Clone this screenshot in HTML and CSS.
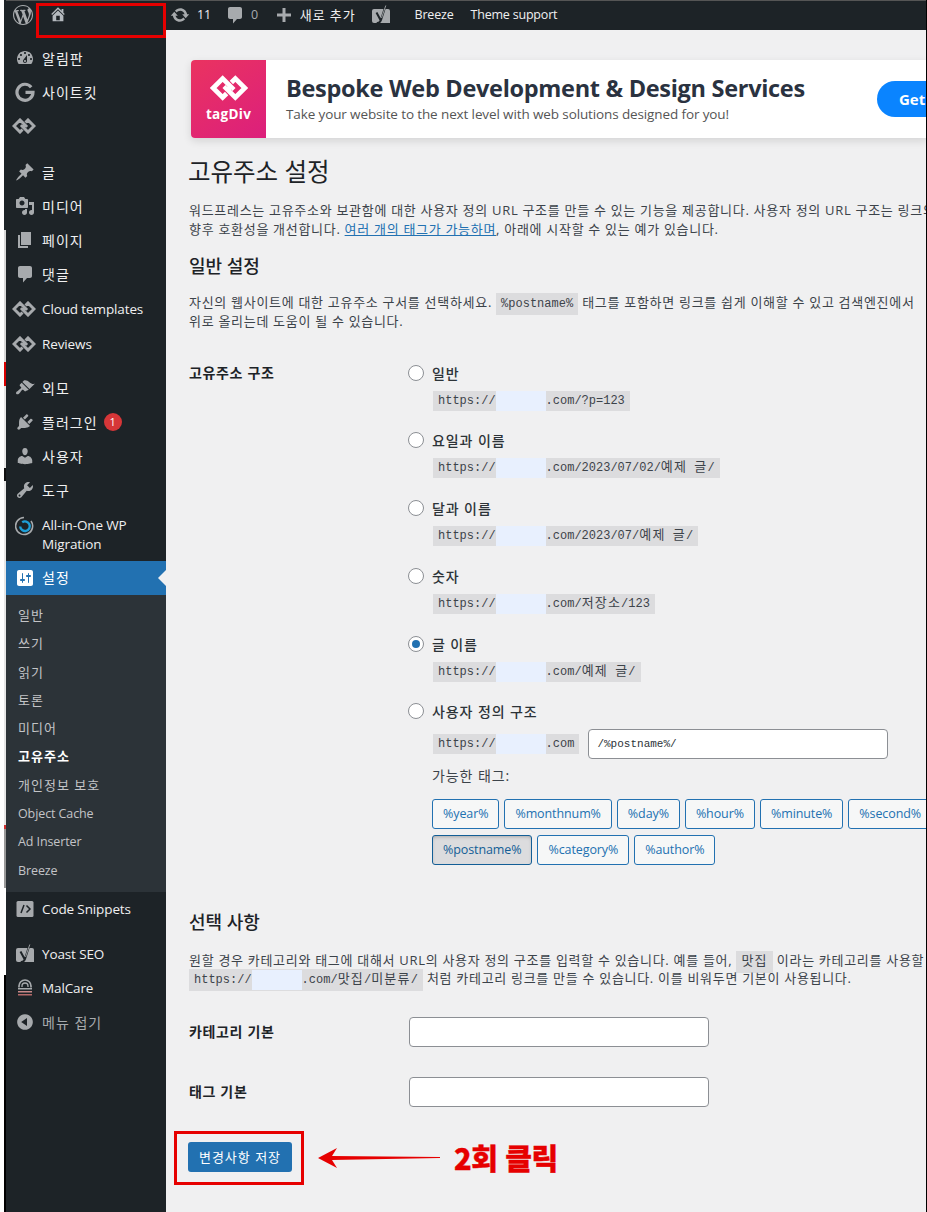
FILE: index.html
```html
<!DOCTYPE html>
<html lang="ko">
<head>
<meta charset="utf-8">
<title>고유주소 설정</title>
<link rel="stylesheet" href="styles.css">
</head>
<body>
<svg class="sprite" xmlns="http://www.w3.org/2000/svg">
  <symbol id="i-wp" viewBox="0 0 20 20"><path d="M20 10c0-5.51-4.49-10-10-10C4.48 0 0 4.49 0 10c0 5.52 4.48 10 10 10 5.51 0 10-4.48 10-10zM7.78 15.37L4.37 6.22c.55-.02 1.17-.08 1.17-.08.5-.06.44-1.13-.06-1.11 0 0-1.45.11-2.37.11-.18 0-.37 0-.58-.01C4.12 2.69 6.87 1.11 10 1.11c2.33 0 4.45.87 6.05 2.34-.68-.11-1.65.39-1.65 1.58 0 .74.45 1.36.9 2.1.35.61.55 1.36.55 2.46 0 1.49-1.4 5-1.4 5l-3.03-8.37c.54-.02.82-.17.82-.17.5-.05.44-1.25-.06-1.22 0 0-1.44.12-2.38.12-.87 0-2.33-.12-2.33-.12-.5-.03-.56 1.2-.06 1.22l.92.08 1.26 3.41zM17.41 10c.24-.64.74-1.87.43-4.25.7 1.29 1.05 2.71 1.05 4.25 0 3.29-1.73 6.24-4.4 7.78.97-2.59 1.94-5.2 2.92-7.78zM6.1 18.09C3.12 16.65 1.11 13.53 1.11 10c0-1.3.23-2.48.72-3.59C3.25 10.3 4.67 14.2 6.1 18.09zm4.03-6.63l2.58 6.98c-.86.29-1.76.45-2.71.45-.79 0-1.57-.11-2.29-.33.81-2.38 1.62-4.74 2.42-7.1z"/></symbol>
  <symbol id="i-home" viewBox="0 0 20 20"><path d="M16 8.5l1.53 1.53-1.06 1.06L10 4.62l-6.47 6.47-1.06-1.06L10 2.5l4 4v-2h2v4zm-6-2.46l6 5.99V18H4v-5.97zM12 17v-5H8v5h4z"/></symbol>
  <symbol id="i-update" viewBox="0 0 20 20"><path d="M10.2 3.28c3.53 0 6.43 2.61 6.92 6h2.08l-3.5 4-3.5-4h2.32c-.45-1.97-2.21-3.44-4.32-3.44-1.45 0-2.73.71-3.54 1.78L4.95 5.66C6.23 4.2 8.11 3.28 10.2 3.28zm-.4 13.44c-3.52 0-6.43-2.61-6.92-6H.8l3.5-4c1.17 1.33 2.33 2.67 3.5 4H5.48c.45 1.97 2.21 3.44 4.32 3.44 1.45 0 2.73-.71 3.54-1.78l1.71 1.95c-1.28 1.46-3.15 2.39-5.25 2.39z"/></symbol>
  <symbol id="i-comment" viewBox="0 0 20 20"><path d="M5 2h10c1.1 0 2 .9 2 2v8c0 1.1-.9 2-2 2h-3l-4 4.5V14H5c-1.1 0-2-.9-2-2V4c0-1.100.9-2 2-2z"/></symbol>
  <symbol id="i-plus" viewBox="0 0 20 20"><path d="M17 8.500v3h-5.500V17h-3v-5.500H3v-3h5.500V3h3v5.500z"/></symbol>
  <symbol id="i-dash" viewBox="0 0 20 20"><path d="M3.760 16h12.480c1.100-1.370 1.760-3.110 1.760-5 0-4.420-3.580-8-8-8s-8 3.580-8 8c0 1.890.66 3.630 1.760 5zM10 4c.55 0 1 .45 1 1s-.45 1-1 1-1-.45-1-1 .45-1 1-1zM6 6c.55 0 1 .45 1 1s-.45 1-1 1-1-.45-1-1 .45-1 1-1zm8 0c.55 0 1 .45 1 1s-.45 1-1 1-1-.45-1-1 .45-1 1-1zm-5.370 5.550L12 7v6c0 1.100-.9 2-2 2s-2-.9-2-2c0-.57.24-1.080.63-1.450zM4 10c.55 0 1 .45 1 1s-.45 1-1 1-1-.45-1-1 .45-1 1-1zm12 0c.55 0 1 .45 1 1s-.45 1-1 1-1-.45-1-1 .45-1 1-1zm-5 3c0-.55-.45-1-1-1s-1 .45-1 1 .45 1 1 1 1-.45 1-1z"/></symbol>
  <symbol id="i-g" viewBox="0 0 20 20"><path d="M16.200 5.200A8 8 0 1 0 18 10.300H10.500" fill="none" stroke="currentColor" stroke-width="3.200"/></symbol>
  <symbol id="i-tag" viewBox="0 0 24 16"><path d="M10.500 11.500L8 14 2 8l6-6 6 6-.8.8M13.500 4.500L16 2l6 6-6 6-6-6 .8-.8" fill="none" stroke="currentColor" stroke-width="3"/></symbol>
  <symbol id="i-pin" viewBox="0 0 20 20"><path d="M10.440 3.020l1.820-1.820 6.360 6.350-1.830 1.820c-1.050-.68-2.480-.57-3.410.36l-.75.75c-.92.93-1.040 2.350-.35 3.410l-1.830 1.820-2.410-2.410-2.800 2.790c-.42.42-3.380 2.710-3.800 2.290s1.860-3.390 2.280-3.810l2.790-2.790L4.100 9.360l1.830-1.820c1.050.69 2.480.57 3.400-.36l.75-.75c.93-.92 1.050-2.350.36-3.410z"/></symbol>
  <symbol id="i-media" viewBox="0 0 20 20"><path d="M13 11V4c0-.55-.45-1-1-1h-1.670L9 1H5L3.670 3H2c-.55 0-1 .45-1 1v7c0 .55.45 1 1 1h10c.55 0 1-.45 1-1zM7 4.500c1.380 0 2.500 1.120 2.500 2.500S8.380 9.500 7 9.500 4.500 8.380 4.500 7 5.620 4.500 7 4.500zM14 6h5v10.500c0 1.380-1.120 2.500-2.500 2.500S14 17.880 14 16.500s1.120-2.500 2.500-2.500c.17 0 .34.020.5.050V9h-3V6zm-4 8.050V13h2v3.500c0 1.380-1.120 2.500-2.500 2.500S7 17.880 7 16.500 8.120 14 9.500 14c.17 0 .34.020.5.050z"/></symbol>
  <symbol id="i-page" viewBox="0 0 20 20"><path d="M6 15V2h10v13H6zm-1 1h8v2H3V5h2v11z"/></symbol>
  <symbol id="i-brush" viewBox="0 0 20 20"><path d="M14.480 11.060L7.410 3.990l1.500-1.500c.5-.56 2.300-.47 3.510.32 1.210.8 1.430 1.280 2.910 2.100 1.180.64 2.450 1.260 4.450.85zm-.71.71L6.700 4.700 4.930 6.470c-.39.39-.39 1.020 0 1.410l1.060 1.060c.39.39.39 1.030 0 1.420-.6.6-1.430 1.110-2.210 1.690-.35.26-.7.53-1.010.84C1.430 13.230.4 14.960 1.400 15.960c.99 1 2.730-.04 3.070-.69.31-.31.58-.66.85-1.010.57-.78 1.080-1.610 1.690-2.210.39-.39 1.020-.39 1.410 0l1.060 1.060c.39.39 1.020.39 1.410 0z"/></symbol>
  <symbol id="i-plugin" viewBox="0 0 20 20"><path d="M13.110 4.360L9.870 7.600 8 5.730l3.240-3.240c.35-.34 1.050-.2 1.560.32.52.51.66 1.210.31 1.550zm-8 1.770l.91-1.120 9.010 9.010-1.190.84c-.71.71-2.630 1.160-3.820 1.160H6.140L4.900 17.260c-.59.59-1.540.59-2.120 0-.59-.58-.59-1.530 0-2.120l1.240-1.240v-3.880c0-1.130.4-3.190 1.090-3.890zm7.260 3.970l3.240-3.240c.34-.35 1.040-.21 1.550.31.52.51.66 1.210.31 1.550l-3.240 3.250z"/></symbol>
  <symbol id="i-users" viewBox="0 0 20 20"><path d="M10 9.250c-2.270 0-2.730-3.440-2.730-3.440C7 4.020 7.820 2 9.970 2c2.160 0 2.980 2.020 2.710 3.810 0 0-.41 3.440-2.680 3.440zm0 2.570L12.720 10c2.390 0 4.520 2.330 4.520 4.530v2.490s-3.650 1.130-7.240 1.130c-3.650 0-7.240-1.130-7.240-1.130v-2.490c0-2.250 1.940-4.480 4.470-4.480z"/></symbol>
  <symbol id="i-wrench" viewBox="0 0 20 20"><path d="M16.680 9.770c-1.340 1.340-3.300 1.670-4.950.99l-5.410 6.520c-.99.99-2.590.99-3.580 0s-.99-2.590 0-3.570l6.520-5.420c-.68-1.650-.35-3.610.99-4.950 1.280-1.280 3.120-1.620 4.720-1.060l-2.890 2.890 2.820 2.820 2.860-2.870c.53 1.580.18 3.390-1.080 4.670zM3.810 16.210c.4.39 1.040.39 1.430 0 .4-.4.4-1.040 0-1.430-.39-.4-1.030-.4-1.430 0-.39.39-.39 1.030 0 1.430z"/></symbol>
  <symbol id="i-settings" viewBox="0 0 20 20"><path d="M18 16V4c0-1.100-.9-2-2-2H4c-1.100 0-2 .9-2 2v12c0 1.100.9 2 2 2h12c1.100 0 2-.9 2-2zM8 11h1c.55 0 1 .45 1 1s-.45 1-1 1H8v1.500c0 .28-.22.5-.5.5s-.5-.22-.5-.5V13H6c-.55 0-1-.45-1-1s.45-1 1-1h1V5.500c0-.28.22-.5.5-.5s.5.22.5.5V11zm5-2h-1c-.55 0-1-.45-1-1s.45-1 1-1h1V5.500c0-.28.22-.5.5-.5s.5.22.5.5V7h1c.55 0 1 .45 1 1s-.45 1-1 1h-1v5.500c0 .28-.22.5-.5.5s-.5-.22-.5-.5V9z"/></symbol>
  <symbol id="i-collapse" viewBox="0 0 20 20"><path d="M10 2.160c4.330 0 7.840 3.510 7.840 7.840s-3.510 7.840-7.840 7.840S2.160 14.330 2.160 10 5.710 2.160 10 2.160zm2 11.720V6.120L6.180 9.970z"/></symbol>
  <symbol id="i-yoast" viewBox="0 0 20 20"><path d="M3 4h14a2 2 0 0 1 2 2v12H3a2 2 0 0 1-2-2V6a2 2 0 0 1 2-2z"/><path d="M5.500 7.500l4 7.500M14.500 1L10 15c-.6 2-1.900 3-4.300 3.200" fill="none" stroke="#1d2327" stroke-width="2"/><path d="M14.800 .5L10.500 13" fill="none" stroke="currentColor" stroke-width=".9"/></symbol>
  <symbol id="i-aio" viewBox="0 0 20 20"><path d="M9 1.500a8.500 8.500 0 1 0 7 3.500" fill="none" stroke="#a7aaad" stroke-width="1.600"/><path d="M5.200 10.500a4.800 4.800 0 1 0 2-4.200" fill="none" stroke="#1e9fd8" stroke-width="2.400"/></symbol>
  <symbol id="i-mal" viewBox="0 0 20 20"><path d="M4 9.500V8a6 6 0 0 1 12 0v1.500" fill="none" stroke="currentColor" stroke-width="1.700"/><path d="M7 9V8a3 3 0 0 1 6 0v1" fill="none" stroke="currentColor" stroke-width="1.300"/><path d="M3 10h14v1.500H3z"/><path d="M3 13h14v1.500H3z" fill="#c98a8a"/><path d="M3 16h14v1.500H3z" fill="#b56a6a"/></symbol>
  <symbol id="i-code" viewBox="0 0 20 20"><rect x="1.500" y="2" width="17" height="16" rx="1.500"/><path d="M9 6l-3 8M11.500 6.500L15 10l-3.500 3.500" fill="none" stroke="#1d2327" stroke-width="1.500"/></symbol>
</svg>

<div class="frame">
  <div class="strip"></div>
  <div class="app">
    <header class="adminbar">
      <svg class="bar-icon wp"><use href="#i-wp"/></svg>
      <svg class="bar-icon home"><use href="#i-home"/></svg>
      <svg class="bar-icon update"><use href="#i-update"/></svg>
      <span class="bar-text count">11</span>
      <svg class="bar-icon comment"><use href="#i-comment"/></svg>
      <span class="bar-text zero">0</span>
      <svg class="bar-icon plus"><use href="#i-plus"/></svg>
      <span class="bar-text new">새로 추가</span>
      <svg class="bar-icon yoast"><use href="#i-yoast"/></svg>
      <span class="bar-text breeze">Breeze</span>
      <span class="bar-text theme">Theme support</span>
    </header>
    <div class="columns">
      <nav class="sidebar">
        <a class="item"><svg class="ico"><use href="#i-dash"/></svg><span class="ko">알림판</span></a>
        <a class="item"><svg class="ico"><use href="#i-g"/></svg><span class="ko">사이트킷</span></a>
        <a class="item"><svg class="ico tag"><use href="#i-tag"/></svg></a>
        <div class="sep"></div>
        <a class="item"><svg class="ico"><use href="#i-pin"/></svg><span class="ko">글</span></a>
        <a class="item"><svg class="ico"><use href="#i-media"/></svg><span class="ko">미디어</span></a>
        <a class="item"><svg class="ico"><use href="#i-page"/></svg><span class="ko">페이지</span></a>
        <a class="item"><svg class="ico"><use href="#i-comment"/></svg><span class="ko">댓글</span></a>
        <a class="item item-wide"><svg class="ico tag"><use href="#i-tag"/></svg><span>Cloud templates</span></a>
        <a class="item item-wide"><svg class="ico tag"><use href="#i-tag"/></svg><span>Reviews</span></a>
        <div class="sep sep-b"></div>
        <a class="item"><svg class="ico"><use href="#i-brush"/></svg><span class="ko">외모</span></a>
        <a class="item"><svg class="ico"><use href="#i-plugin"/></svg><span class="ko">플러그인</span><b class="badge">1</b></a>
        <a class="item"><svg class="ico"><use href="#i-users"/></svg><span class="ko">사용자</span></a>
        <a class="item"><svg class="ico"><use href="#i-wrench"/></svg><span class="ko">도구</span></a>
        <a class="item item-two"><svg class="ico"><use href="#i-aio"/></svg><span>All-in-One WP<br>Migration</span></a>
        <a class="item current"><svg class="ico"><use href="#i-settings"/></svg><span class="ko">설정</span></a>
        <div class="submenu">
          <a class="ko-sub">일반</a><a class="ko-sub">쓰기</a><a class="ko-sub">읽기</a><a class="ko-sub">토론</a><a class="ko-sub">미디어</a>
          <a class="ko-sub active">고유주소</a>
          <a class="ko-sub">개인정보 보호</a><a>Object Cache</a><a>Ad Inserter</a><a>Breeze</a>
        </div>
        <a class="item"><svg class="ico"><use href="#i-code"/></svg><span>Code Snippets</span></a>
        <div class="sep sep-c"></div>
        <a class="item"><svg class="ico"><use href="#i-yoast"/></svg><span>Yoast SEO</span></a>
        <a class="item"><svg class="ico"><use href="#i-mal"/></svg><span>MalCare</span></a>
        <a class="item muted"><svg class="ico"><use href="#i-collapse"/></svg><span class="ko">메뉴 접기</span></a>
      </nav>
      <main class="content">
        <section class="banner">
          <div class="banner-logo">
            <svg class="banner-mark"><use href="#i-tag"/></svg>
            <span>tagDiv</span>
          </div>
          <div class="banner-copy">
            <strong>Bespoke Web Development &amp; Design Services</strong>
            <span>Take your website to the next level with web solutions designed for you!</span>
          </div>
          <a class="banner-cta">Get</a>
        </section>
        <h1>고유주소 설정</h1>
        <p class="intro">워드프레스는 고유주소와 보관함에 대한 사용자 정의 URL 구조를 만들 수 있는 기능을 제공합니다. 사용자 정의 URL 구조는 링크의<br>향후 호환성을 개선합니다. <a class="link">여러 개의 태그가 가능하며</a>, 아래에 시작할 수 있는 예가 있습니다.</p>
        <h2>일반 설정</h2>
        <p class="general">자신의 웹사이트에 대한 고유주소 구서를 선택하세요. <code>%postname%</code> 태그를 포함하면 링크를 쉽게 이해할 수 있고 검색엔진에서<br>위로 올리는데 도움이 될 수 있습니다.</p>

        <div class="form-row structure">
          <div class="row-label">고유주소 구조</div>
          <div class="options">
            <div class="option">
              <label class="radio-line"><i class="radio"></i>일반</label>
              <div class="url-row"><code class="url">https://<i class="mask"></i>.com/?p=123</code></div>
            </div>
            <div class="option">
              <label class="radio-line"><i class="radio"></i>요일과 이름</label>
              <div class="url-row"><code class="url">https://<i class="mask"></i>.com/2023/07/02/<span class="kc">예제</span> <span class="kc">글</span>/</code></div>
            </div>
            <div class="option">
              <label class="radio-line"><i class="radio"></i>달과 이름</label>
              <div class="url-row"><code class="url">https://<i class="mask"></i>.com/2023/07/<span class="kc">예제</span> <span class="kc">글</span>/</code></div>
            </div>
            <div class="option">
              <label class="radio-line"><i class="radio"></i>숫자</label>
              <div class="url-row"><code class="url">https://<i class="mask"></i>.com/<span class="kc">저장소</span>/123</code></div>
            </div>
            <div class="option">
              <label class="radio-line"><i class="radio checked"></i>글 이름</label>
              <div class="url-row"><code class="url">https://<i class="mask"></i>.com/<span class="kc">예제</span> <span class="kc">글</span>/</code></div>
            </div>
            <div class="option custom">
              <label class="radio-line"><i class="radio"></i>사용자 정의 구조</label>
              <div class="custom-row">
                <code class="url">https://<i class="mask"></i>.com</code>
                <div class="field field-custom">/%postname%/</div>
              </div>
              <div class="tags-label">가능한 태그:</div>
              <div class="tags">
                <a class="tag-btn">%year%</a><a class="tag-btn">%monthnum%</a><a class="tag-btn">%day%</a><a class="tag-btn">%hour%</a><a class="tag-btn">%minute%</a><a class="tag-btn">%second%</a>
              </div>
              <div class="tags">
                <a class="tag-btn on">%postname%</a><a class="tag-btn">%category%</a><a class="tag-btn">%author%</a>
              </div>
            </div>
          </div>
        </div>

        <h2 class="optional">선택 사항</h2>
        <p class="optional-text">원할 경우 카테고리와 태그에 대해서 URL의 사용자 정의 구조를 입력할 수 있습니다. 예를 들어, <code><span class="kc">맛집</span></code> 이라는 카테고리를 사용할<br><code class="url-inline">https://<i class="mask mask-s"></i>.com/<span class="kc">맛집</span>/<span class="kc">미분류</span>/</code> 처럼 카테고리 링크를 만들 수 있습니다. 이를 비워두면 기본이 사용됩니다.</p>

        <div class="form-row input-row first">
          <div class="row-label">카테고리 기본</div>
          <div class="field"></div>
        </div>
        <div class="form-row input-row">
          <div class="row-label">태그 기본</div>
          <div class="field"></div>
        </div>
        <a class="save">변경사항 저장</a>
      </main>
    </div>
  </div>

  <div class="mark mark-home"></div>
  <div class="mark mark-save"></div>
  <svg class="arrow" viewBox="0 0 124 22"><polygon points="0,11 19,1 14,9 122,10 122,11 14,13 19,21" /></svg>
  <div class="note">2회 클릭</div>
</div>
</body>
</html>
```
FILE: styles.css
```css
* { box-sizing: border-box; }
html, body { margin: 0; padding: 0; }
body {
  width: 927px;
  height: 1212px;
  overflow: hidden;
  background: #fff;
  color: #3c434a;
  font-family: "Open Sans", "Noto Sans CJK KR", sans-serif;
  font-size: 13px;
}
.sprite { display: none; }
svg { fill: currentColor; display: block; flex: none; }

.frame { position: relative; display: flex; width: 927px; height: 1212px; overflow: hidden; }
.strip {
  width: 6px;
  flex: none;
  border-left: 4px solid #fff;
  background: linear-gradient(to bottom,
    #1d2327 0, #1d2327 230px,
    #d8d8d8 230px, #d8d8d8 362px,
    #d90000 362px, #d90000 386px,
    #e6e6e6 386px, #e6e6e6 468px,
    #111 468px, #111 481px,
    #e6e6e6 481px, #e6e6e6 825px,
    #d03030 825px, #d03030 829px,
    #999 829px, #999 888px,
    #fff 888px, #fff 975px,
    #000 975px);
}
.app { flex: 1; min-width: 0; display: flex; flex-direction: column; border-right: 1px solid #000; }

/* admin bar */
.adminbar {
  height: 30px;
  flex: none;
  display: flex;
  align-items: center;
  padding-bottom: 2px;
  background: #1d2327;
  border-top: 1px solid #555;
  color: #a7aaad;
}
.bar-text { color: #f0f0f1; font-size: 12.5px; letter-spacing: -.2px; line-height: 26px; white-space: nowrap; }
.bar-icon { width: 20px; height: 20px; }
.wp { margin-left: 7px; }
.home { margin-left: 16px; width: 18px; height: 18px; margin-top: -1px; color: #b4b9be; }
.update { margin-left: 103px; }
.count { margin-left: 7px; }
.comment { margin-left: 14px; }
.zero { margin-left: 6px; color: #a7aaad; }
.plus { margin-left: 16px; }
.adminbar .new { margin-left: 6px; font-size: 13px; letter-spacing: .9px; }
.adminbar .yoast { margin-left: 15px; }
.breeze { margin-left: 24px; }
.theme { margin-left: 17px; }

/* sidebar */
.columns { flex: 1; display: flex; min-height: 0; }
.sidebar { width: 160px; flex: none; background: #1d2327; padding-top: 11px; }
.item {
  display: flex;
  align-items: center;
  height: 34px;
  padding-left: 9px;
  color: #f0f0f1;
  font-size: 13.5px;
  letter-spacing: -.12px;
  white-space: nowrap;
  position: relative;
}
.ko { font-size: 14px; letter-spacing: 1px; }
.ico { width: 20px; height: 20px; margin-right: 7px; color: #a7aaad; }
.ico.tag { width: 24px; height: 16px; margin-left: -3px; margin-right: 6px; }
.item-wide { height: 35px; }
.item-two { height: 53px; line-height: 19px; align-items: center; margin-top: 1px; }
.item-two .ico { margin-top: -18px; }
.sep { height: 12px; }
.sep-b { height: 10px; }
.sep-c { height: 11px; }
.badge {
  width: 18px; height: 18px; border-radius: 50%;
  margin-left: 6px;
  background: #d63638; color: #fff;
  font-size: 11px; font-weight: 400; text-align: center; line-height: 18px;
}
.current { background: #2271b1; color: #fff; }
.current .ico { color: #fff; }
.current .ko { margin-top: -2px; }
.current::after {
  content: "";
  position: absolute;
  right: 0; top: 9px;
  border: 8px solid transparent;
  border-right-color: #f0f0f1;
  border-left-width: 0;
}
.submenu { background: #2c3338; padding: 7px 0 7px; }
.submenu a {
  display: block;
  height: 28.3px;
  line-height: 28px;
  padding-left: 12px;
  color: #c3c4c7;
  font-size: 12.5px;
  letter-spacing: -.1px;
  white-space: nowrap;
}
.submenu .ko-sub { font-size: 13px; letter-spacing: 1px; line-height: 27px; }
.submenu .active { color: #fff; font-weight: 700; }
.muted { color: #a7aaad; }

/* content */
.content {
  flex: 1;
  min-width: 0;
  overflow: hidden;
  background: #f0f0f1;
  padding: 30px 0 0 23px;
}
.banner {
  display: flex;
  align-items: center;
  width: 736px;
  height: 78px;
  margin-left: 2px;
  background: #fff;
  border-radius: 4px 0 0 4px;
  box-shadow: 0 3px 8px rgba(0,0,0,.12);
}
.banner-logo {
  width: 75px;
  height: 78px;
  flex: none;
  display: flex;
  flex-direction: column;
  align-items: center;
  padding-top: 15px;
  border-radius: 4px 0 0 4px;
  background: linear-gradient(145deg, #ea3360 0%, #dc1f7c 100%);
  color: #fff;
  font-size: 13.5px;
  font-weight: 700;
  letter-spacing: .3px;
}
.banner-mark { width: 38px; height: 26px; margin-bottom: 4px; }
.banner-copy { display: flex; flex-direction: column; margin-left: 20px; padding-bottom: 3px; width: 591px; flex: none; }
.banner-copy strong { color: #2a3240; font-size: 23.5px; line-height: 32px; font-weight: 700; letter-spacing: -.3px; white-space: nowrap; }
.banner-copy span { color: #555; font-size: 13.5px; line-height: 20px; letter-spacing: -.12px; white-space: nowrap; }
.banner-cta {
  flex: none;
  width: 50px;
  height: 36px;
  padding-left: 22px;
  border-radius: 18px 0 0 18px;
  background: #0a84ff;
  color: #fff;
  font-size: 15px;
  font-weight: 700;
  line-height: 36px;
  white-space: nowrap;
}
h1 { margin: 18px 0 0; font-size: 24.5px; line-height: 32px; font-weight: 400; color: #1d2327; margin-left: -1px; }
h2 { margin: 0; font-size: 18px; line-height: 24px; font-weight: 500; color: #1d2327; }
p { margin: 0; white-space: nowrap; }
.intro { margin-top: 13px; line-height: 18.5px; font-size: 13px; letter-spacing: .7px; }
.content > h2 { margin-top: 15.5px; }
.general { margin-top: 15px; line-height: 19px; font-size: 13px; letter-spacing: .7px; }
.link { color: #2271b1; text-decoration: underline; }
code {
  font-family: "Liberation Mono", "Noto Sans CJK KR", monospace;
  font-size: 12px;
  line-height: 1;
  background: #dcdcde;
  padding: 4px 5px;
  color: #3c434a;
  letter-spacing: 0;
}
.kc { font-family: "Noto Sans CJK KR", sans-serif; font-size: 13px; letter-spacing: 1.2px; line-height: 1; }
.url { display: inline-block; height: 20px; line-height: 20px; padding: 0 5px; margin-left: 1px; white-space: pre; }
.url-inline { white-space: pre; }
.mask { display: inline-block; width: 50px; height: 20px; vertical-align: top; background: #e8f0fe; }
.mask-s { height: 20px; margin-top: -4px; margin-bottom: -4px; vertical-align: middle; }

.form-row { display: flex; }
.structure { margin-top: 32px; }
.row-label { width: 220px; flex: none; line-height: 20px; font-weight: 700; font-size: 14px; color: #1d2327; letter-spacing: .65px; }
.options { display: flex; flex-direction: column; gap: 19.8px; width: 600px; flex: none; margin-left: -1px; }
.option { display: flex; flex-direction: column; gap: 8px; }
.radio-line { display: flex; align-items: center; height: 20px; font-size: 14px; letter-spacing: .9px; font-weight: 500; color: #2c3338; }
.radio {
  width: 16px; height: 16px; flex: none;
  margin-right: 8px;
  border: 1px solid #8c8f94;
  border-radius: 50%;
  background: #fff;
  display: flex; align-items: center; justify-content: center;
}
.radio.checked::before { content: ""; width: 8px; height: 8px; border-radius: 50%; background: #2271b1; }
.option > div { padding-left: 24px; }
.url-row { display: flex; height: 20px; }
.custom-row { display: flex; align-items: center; gap: 9px; margin-bottom: -1px; height: 30px; }
.field {
  width: 300px; height: 30px;
  background: #fff;
  border: 1px solid #8c8f94;
  border-radius: 4px;
}
.field-custom {
  padding: 0 8px;
  line-height: 28px;
  font-family: "Liberation Mono", monospace;
  font-size: 11px;
  color: #2c3338;
}
.option .tags-label { line-height: 20px; font-size: 14px; letter-spacing: .9px; color: #3c434a; }
.option .tags { display: flex; gap: 5px; }
.option .tags-label + .tags { margin-top: 5px; }
.option .tags + .tags { margin-top: -2px; }
.tag-btn {
  height: 30px;
  flex: none;
  padding: 0 10px;
  line-height: 28px;
  background: #f6f7f7;
  border: 1px solid #2271b1;
  border-radius: 3px;
  color: #2271b1;
  font-size: 12.5px;
  letter-spacing: -.1px;
  white-space: nowrap;
}
.tag-btn.on { background: #dcdcde; border-color: #135e96; color: #135e96; box-shadow: inset 0 2px 5px -3px rgba(0,0,0,.5); }
.content > h2.optional { margin-top: 45px; }
.optional-text { margin-top: 17px; line-height: 18px; font-size: 13px; letter-spacing: .7px; }
.input-row { align-items: center; margin-top: 30px; }
.input-row.first { margin-top: 30px; }
.save {
  display: block;
  width: 104px;
  height: 30px;
  margin: 35px 0 0 -1px;
  background: #2271b1;
  border-radius: 3px;
  color: #fff;
  font-size: 13px;
  letter-spacing: 1px;
  line-height: 30px;
  text-align: center;
}

/* annotations drawn over the screenshot */
.mark { position: absolute; border: 3px solid #e60000; }
.mark-home { left: 36px; top: 3px; width: 130px; height: 35px; }
.mark-save { left: 174px; top: 1131px; width: 130px; height: 54px; }
.arrow { position: absolute; left: 318px; top: 1147px; width: 124px; height: 22px; fill: #e60000; }
.note {
  position: absolute;
  left: 454px; top: 1136px;
  color: #e60000;
  font-family: "Noto Sans CJK KR", sans-serif;
  font-size: 29px;
  line-height: 42px;
  font-weight: 900;
  letter-spacing: -.4px;
  -webkit-text-stroke: .4px #e60000;
  white-space: nowrap;
}
```
